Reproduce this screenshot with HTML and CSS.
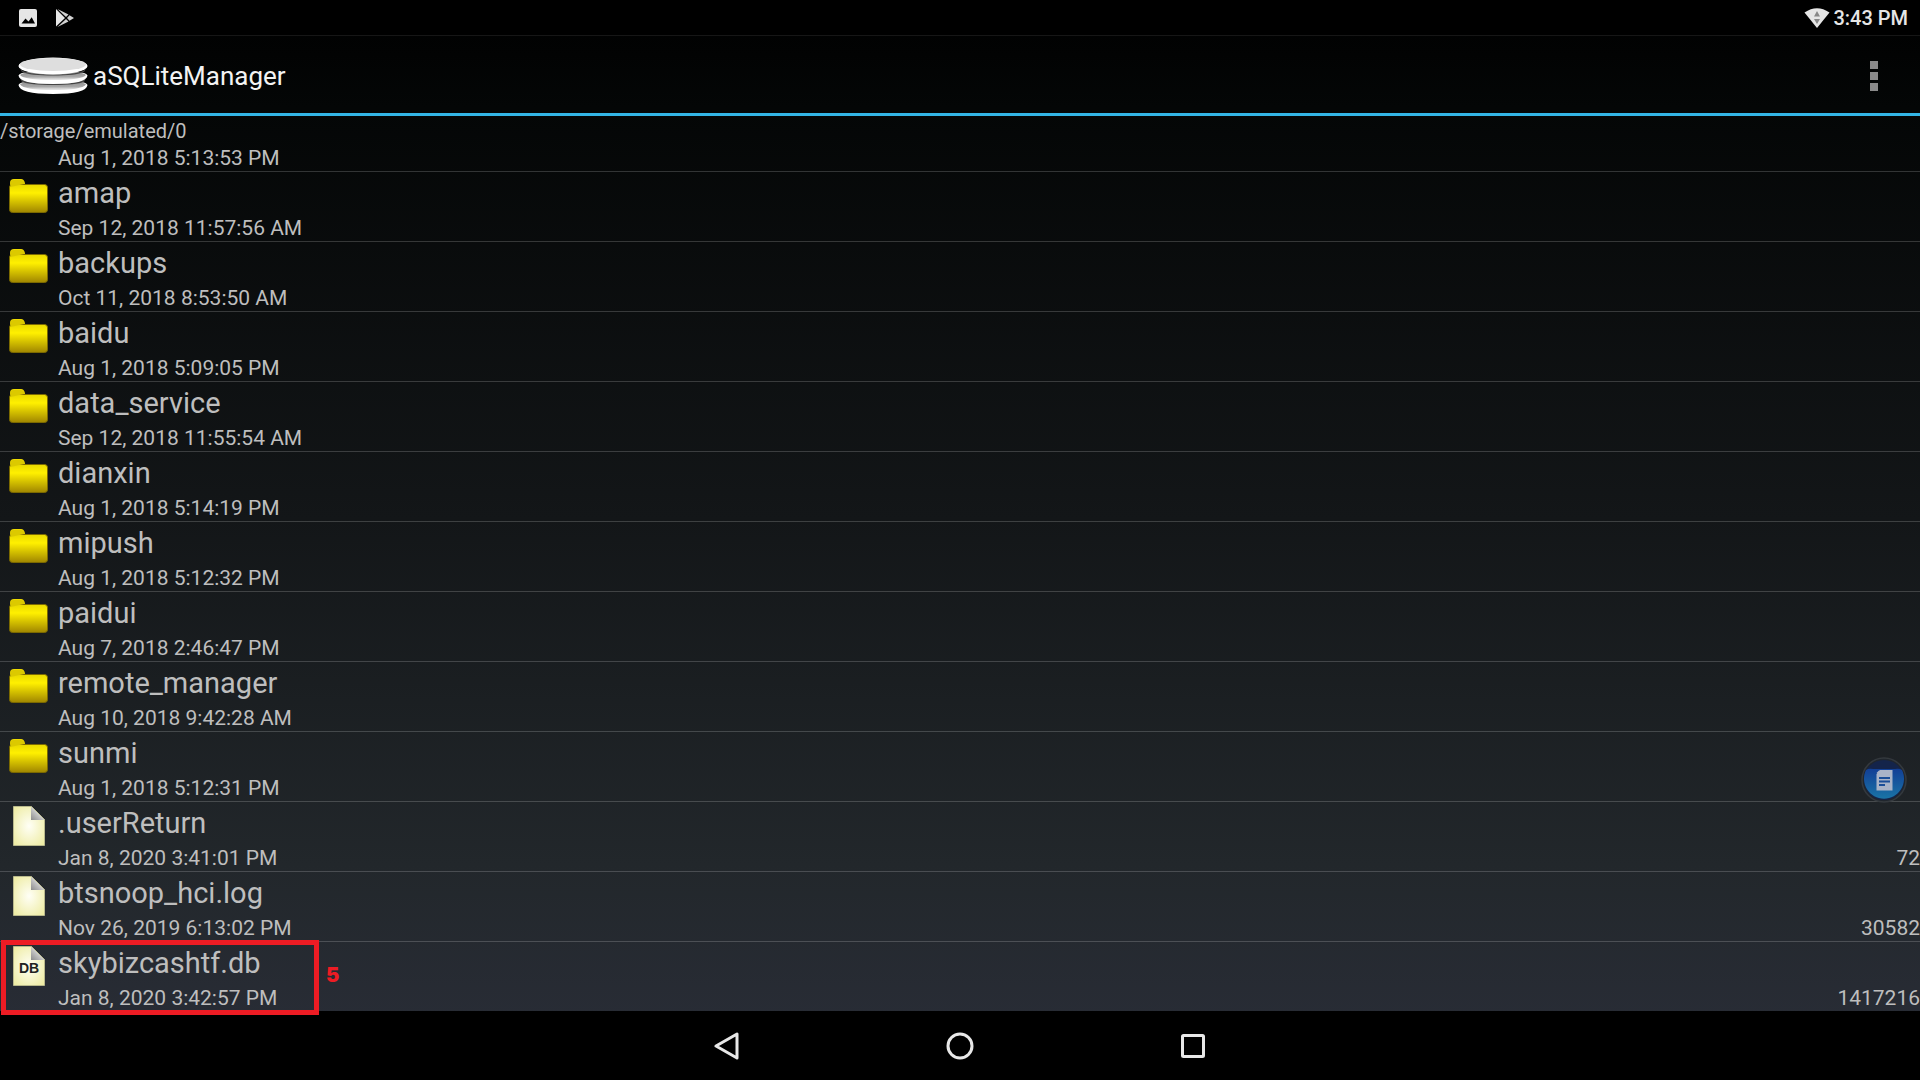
FILE: index.html
```
<!DOCTYPE html>
<html lang="en">
<head>
    <meta charset="UTF-8">
    <meta name="viewport" content="width=device-width, initial-scale=1.0">
    <title>aSQLiteManager</title>
    <link rel="stylesheet" href="styles.css">
</head>
<body>
    <!-- shared icon shapes -->
    <svg class="defs" width="0" height="0" aria-hidden="true">
        <defs>
            <linearGradient id="folderFill" x1="0" y1="0" x2="0" y2="1">
                <stop offset="0" stop-color="#e8d800"/>
                <stop offset="0.3" stop-color="#fff000"/>
                <stop offset="1" stop-color="#a08600"/>
            </linearGradient>
            <linearGradient id="tabFill" x1="0" y1="0" x2="0" y2="1">
                <stop offset="0" stop-color="#f0dc00"/>
                <stop offset="1" stop-color="#c0ac00"/>
            </linearGradient>
            <radialGradient id="fileFill" cx="0.5" cy="0.5" r="0.65">
                <stop offset="0" stop-color="#fffff6"/>
                <stop offset="1" stop-color="#eeeca4"/>
            </radialGradient>
            <linearGradient id="foldFill" x1="0" y1="1" x2="0.7" y2="0.3">
                <stop offset="0" stop-color="#8c8c8c"/>
                <stop offset="1" stop-color="#e4e4e4"/>
            </linearGradient>
            <linearGradient id="diskFill" x1="0" y1="0" x2="0" y2="1">
                <stop offset="0" stop-color="#8a8a8a"/>
                <stop offset="0.65" stop-color="#a8a8a8"/>
                <stop offset="0.9" stop-color="#dedede"/>
                <stop offset="1" stop-color="#e4e4e4"/>
            </linearGradient>
            <linearGradient id="noteFill" x1="0" y1="0" x2="0" y2="1">
                <stop offset="0" stop-color="#123f96"/>
                <stop offset="1" stop-color="#1a74a6"/>
            </linearGradient>
        </defs>
        <symbol id="folder" viewBox="0 0 48 48">
            <path d="M10 13V8q0-4 4-4h7q3 0 4 4v5z" fill="url(#tabFill)"/>
            <rect x="9.500" y="9.500" width="38" height="28" rx="3" fill="url(#folderFill)" stroke="#7b6900" stroke-width="1"/>
            <path d="M10.500 12V8q0-3 3-3h7q3 0 3.500 4z" fill="#dcc900"/>
        </symbol>
        <symbol id="file" viewBox="0 0 48 48">
            <path d="M13.500 1.500h18l13 13v26h-31z" fill="url(#fileFill)" stroke="#b9b98c"/>
            <path d="M31 1.500v13.500h13.500z" fill="url(#foldFill)"/>
        </symbol>
    </svg>

    <div class="status-bar">
        <div class="status-icons">
            <svg width="18" height="18" viewBox="0 0 18 18">
                <rect width="18" height="18" rx="2" fill="#e6e6e6"/>
                <path d="M2.500 14.500l4-5 3 3 3.200-4.200 3.300 6.200z" fill="#000"/>
            </svg>
            <svg width="18" height="18" viewBox="0 0 18 18">
                <path d="M0 0v17.500L9 9z" fill="#e6e6e6"/>
                <path d="M1.500 0L10 8l2.500-2.500zM1.500 18L10 10l2.500 2.500zM11 9l2.500-2.800L18 9l-4.500 2.800z" fill="#d2d2d2"/>
            </svg>
        </div>
        <div class="status-right">
            <svg width="26" height="20" viewBox="0 0 26 20">
                <path d="M0.500 4.500Q13-4 25.500 4.500L13 20z" fill="#e6e6e6"/>
                <path d="M13 3l3 5.500h-6zM10 11h6l-3 5z" fill="#888"/>
            </svg>
            <span class="clock">3:43 PM</span>
        </div>
    </div>

    <header class="action-bar">
        <svg class="logo" width="70" height="38" viewBox="0 0 70 38">
            <path d="M0.500 28q2-5 34.500-5t34.500 5q-1 9-34.500 9t-34.500-9z" fill="#fff"/>
            <path d="M2 27.500q4-4 33-4t33 4q-4 5.500-33 5.500t-33-5.500z" fill="url(#diskFill)"/>
            <path d="M2 21q6 6 33 6t33-6l-2 4q-8 3-31 3t-31-3z" fill="#444"/>
            <path d="M0.500 18.500q2-5 34.500-5t34.500 5q-1 8.500-34.500 8.500t-34.500-8.500z" fill="#fff"/>
            <path d="M2 18q4-4 33-4t33 4q-4 5-33 5t-33-5z" fill="url(#diskFill)"/>
            <path d="M2 12q6 5.500 33 5.500t33-5.500l-2 3q-8 3.500-31 3.500t-31-3.500z" fill="#444"/>
            <ellipse cx="35" cy="9" rx="34.500" ry="8.500" fill="#fff"/>
            <ellipse cx="35" cy="7.500" rx="33" ry="6.500" fill="#dedede"/>
        </svg>
        <h1 class="title">aSQLiteManager</h1>
        <button class="menu-button" type="button" aria-label="More options">
            <svg width="8" height="30" viewBox="0 0 8 30" fill="#8a8a8a">
                <rect width="8" height="8"/>
                <rect y="11" width="8" height="8"/>
                <rect y="22" width="8" height="8"/>
            </svg>
        </button>
    </header>

    <main class="browser">
        <p class="path">/storage/emulated/0</p>
        <ul class="file-list">
            <li class="row row-partial">
                <span class="date">Aug 1, 2018 5:13:53 PM</span>
            </li>
            <li class="row">
                <svg class="icon"><use href="#folder"/></svg>
                <a class="name" href="#">amap</a>
                <span class="date">Sep 12, 2018 11:57:56 AM</span>
            </li>
            <li class="row">
                <svg class="icon"><use href="#folder"/></svg>
                <a class="name" href="#">backups</a>
                <span class="date">Oct 11, 2018 8:53:50 AM</span>
            </li>
            <li class="row">
                <svg class="icon"><use href="#folder"/></svg>
                <a class="name" href="#">baidu</a>
                <span class="date">Aug 1, 2018 5:09:05 PM</span>
            </li>
            <li class="row">
                <svg class="icon"><use href="#folder"/></svg>
                <a class="name" href="#">data_service</a>
                <span class="date">Sep 12, 2018 11:55:54 AM</span>
            </li>
            <li class="row">
                <svg class="icon"><use href="#folder"/></svg>
                <a class="name" href="#">dianxin</a>
                <span class="date">Aug 1, 2018 5:14:19 PM</span>
            </li>
            <li class="row">
                <svg class="icon"><use href="#folder"/></svg>
                <a class="name" href="#">mipush</a>
                <span class="date">Aug 1, 2018 5:12:32 PM</span>
            </li>
            <li class="row">
                <svg class="icon"><use href="#folder"/></svg>
                <a class="name" href="#">paidui</a>
                <span class="date">Aug 7, 2018 2:46:47 PM</span>
            </li>
            <li class="row">
                <svg class="icon"><use href="#folder"/></svg>
                <a class="name" href="#">remote_manager</a>
                <span class="date">Aug 10, 2018 9:42:28 AM</span>
            </li>
            <li class="row">
                <svg class="icon"><use href="#folder"/></svg>
                <a class="name" href="#">sunmi</a>
                <span class="date">Aug 1, 2018 5:12:31 PM</span>
            </li>
            <li class="row">
                <svg class="icon"><use href="#file"/></svg>
                <a class="name" href="#">.userReturn</a>
                <span class="date">Jan 8, 2020 3:41:01 PM</span>
                <span class="size">72</span>
            </li>
            <li class="row">
                <svg class="icon"><use href="#file"/></svg>
                <a class="name" href="#">btsnoop_hci.log</a>
                <span class="date">Nov 26, 2019 6:13:02 PM</span>
                <span class="size">30582</span>
            </li>
            <li class="row">
                <svg class="icon"><use href="#file"/><text class="icon-text" x="29" y="28" text-anchor="middle">DB</text></svg>
                <a class="name" href="#">skybizcashtf.db</a>
                <span class="date">Jan 8, 2020 3:42:57 PM</span>
                <span class="size">1417216</span>
                <div class="marker"><span class="marker-number">5</span></div>
            </li>
        </ul>
        <button class="float-button" type="button" aria-label="Notes">
            <svg width="46" height="46" viewBox="0 0 46 46">
                <circle cx="23" cy="23" r="22" fill="#20262d" stroke="#34393e" stroke-width="1.500"/>
                <circle cx="23" cy="23" r="20" fill="#14244a"/>
                <path d="M5 13Q8 11 12 12h22q4-1 7 1A20 20 0 1 1 5 13z" fill="url(#noteFill)"/>
                <path d="M19 13h12.500v20.500h-16V17z" fill="#a9b4c8"/>
                <path d="M15.500 16l3-3v3z" fill="#a9b4c8"/>
                <path d="M18 21h11M18 24.500h11M18 28h6" stroke="#1b4f98" stroke-width="1.800"/>
            </svg>
        </button>
    </main>

    <nav class="nav-bar">
        <button class="nav-button" type="button" aria-label="Back">
            <svg width="28" height="28" viewBox="0 0 28 28"><path d="M24 2v24L3 14z"/></svg>
        </button>
        <button class="nav-button" type="button" aria-label="Home">
            <svg width="28" height="28" viewBox="0 0 28 28"><circle cx="14" cy="14" r="12"/></svg>
        </button>
        <button class="nav-button" type="button" aria-label="Recent apps">
            <svg width="28" height="28" viewBox="0 0 28 28"><rect x="3.500" y="3.500" width="21" height="21" rx="1"/></svg>
        </button>
    </nav>
</body>
</html>
```
FILE: styles.css
```
* {
    margin: 0;
    padding: 0;
    box-sizing: border-box;
}

body {
    font-family: Roboto, "Liberation Sans", sans-serif;
    background: linear-gradient(180deg, #000 0%, #040606 10%, #131618 48%, #22272b 80%, #282c35 94%);
    color: #bebebe;
    min-height: 100vh;
    display: flex;
    flex-direction: column;
}

button {
    background: none;
    border: none;
    cursor: pointer;
    display: flex;
    align-items: center;
    justify-content: center;
}

.defs {
    position: absolute;
}

/* status bar */
.status-bar {
    display: flex;
    align-items: center;
    justify-content: space-between;
    height: 36px;
    padding: 0 12px 0 19px;
    background: #000;
    border-bottom: 1px solid #161616;
}

.status-icons {
    display: flex;
    gap: 19px;
}

.status-right {
    display: flex;
    align-items: center;
    gap: 3px;
}

.clock {
    font-size: 20px;
    font-weight: 500;
    color: #e6e6e6;
}

/* title bar */
.action-bar {
    display: flex;
    align-items: center;
    height: 80px;
    padding: 2px 24px 0 18px;
    border-bottom: 3px solid #33b5e5;
}

.title {
    flex: 1;
    margin-left: 5px;
    font-size: 26px;
    font-weight: 400;
    color: #f3f3f3;
}

.menu-button {
    width: 44px;
    height: 60px;
}

/* file list */
.browser {
    position: relative;
    flex: 1;
}

.path {
    padding-top: 2px;
    font-size: 20px;
    line-height: 26px;
}

.file-list {
    list-style: none;
}

.row {
    position: relative;
    display: grid;
    grid-template-columns: 58px 1fr auto;
    grid-template-rows: 42px 27px;
    border-bottom: 1px solid rgba(255, 255, 255, 0.18);
}

.row:last-child {
    border-bottom: none;
}

.row-partial {
    grid-template-rows: 27px;
}

.icon {
    grid-row: 1 / 3;
    width: 48px;
    height: 48px;
    margin-top: 3px;
}

.icon-text {
    font-family: "Liberation Sans", sans-serif;
    font-size: 14px;
    font-weight: bold;
    fill: #222;
}

.name {
    grid-column: 2 / 4;
    font-size: 29px;
    line-height: 42px;
    color: inherit;
    text-decoration: none;
}

.date {
    grid-column: 2;
}

.date,
.size {
    font-size: 21px;
    line-height: 29px;
}

/* red frame around the database file */
.marker {
    position: absolute;
    top: -2px;
    left: 1px;
    bottom: -4px;
    width: 318px;
    border: 5px solid #ed1c24;
    pointer-events: none;
    z-index: 1;
}

.marker-number {
    position: absolute;
    left: 100%;
    top: 18px;
    margin-left: 12px;
    font-family: Inter, "Liberation Sans", sans-serif;
    font-size: 20px;
    font-weight: 900;
    line-height: 24px;
    color: #ed1c24;
}

.float-button {
    position: absolute;
    right: 13px;
    bottom: 208px;
}

/* navigation bar */
.nav-bar {
    display: flex;
    align-items: center;
    justify-content: center;
    gap: 185px;
    height: 69px;
    background: #000;
}

.nav-button {
    width: 48px;
    height: 48px;
}

.nav-button svg {
    fill: none;
    stroke: #e8e8e8;
    stroke-width: 3;
    stroke-linejoin: round;
}
```
